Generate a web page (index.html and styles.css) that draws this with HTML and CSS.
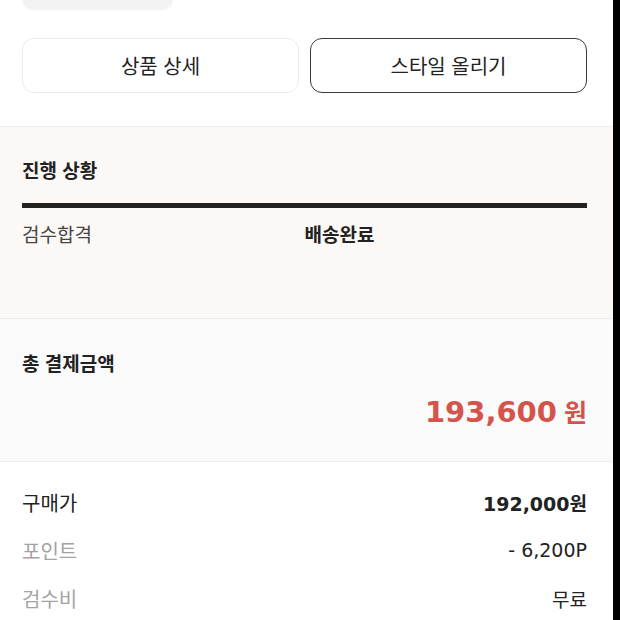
FILE: index.html
```html
<!DOCTYPE html>
<html lang="ko">
<head>
<meta charset="utf-8">
<link rel="stylesheet" href="styles.css">
</head>
<body>
<div class="screen">
  <div class="thumb-bar"><div class="thumb"></div></div>

  <div class="actions">
    <button class="btn btn-light">상품 상세</button>
    <button class="btn btn-dark">스타일 올리기</button>
  </div>

  <section class="progress">
    <h2 class="sec-title">진행 상황</h2>
    <div class="bar"></div>
    <div class="steps">
      <span class="step">검수합격</span>
      <span class="step step-current">배송완료</span>
    </div>
  </section>

  <section class="total">
    <h2 class="sec-title">총 결제금액</h2>
    <div class="price"><span class="price-num">193,600</span><span class="price-unit">원</span></div>
  </section>

  <section class="details">
    <div class="row">
      <span class="row-label row-label-main">구매가</span>
      <span class="row-value row-value-bold">192,000원</span>
    </div>
    <div class="row">
      <span class="row-label">포인트</span>
      <span class="row-value">- 6,200P</span>
    </div>
    <div class="row">
      <span class="row-label">검수비</span>
      <span class="row-value">무료</span>
    </div>
  </section>
</div>
</body>
</html>
```

FILE: styles.css
```css
* { box-sizing: border-box; }
html, body { margin: 0; padding: 0; }
body {
  background: #000;
  font-family: "Noto Sans CJK KR", "Noto Sans", sans-serif;
  color: #222;
}
.screen {
  width: 613px;
  height: 620px;
  background: #fff;
  overflow: hidden;
}
.thumb-bar { padding: 0 22px; }
.thumb {
  width: 151px;
  height: 10px;
  background: #f3f3f3;
  border-radius: 0 0 10px 10px;
}
.actions {
  display: grid;
  grid-template-columns: 1fr 1fr;
  gap: 11px;
  padding: 28px 26px 0 22px;
  margin-bottom: 33px;
}
.btn {
  height: 55px;
  border-radius: 12px;
  background: #fff;
  font-family: "Noto Sans CJK KR", sans-serif;
  font-size: 20px;
  font-weight: 400;
  color: #222;
  padding: 0;
}
.btn-light { border: 1px solid #ebebeb; }
.btn-dark { border: 1.5px solid #3a3a3a; }

.sec-title {
  margin: 0;
  font-size: 19px;
  line-height: 24px;
  font-weight: 700;
  color: #222;
}
.progress {
  border-top: 1px solid #efedec;
  background: #fcf8f6;
  padding: 31px 26px 72px 22px;
}
.bar {
  margin-top: 21px;
  height: 5px;
  background: #222;
}
.steps {
  margin-top: 14px;
  display: grid;
  grid-template-columns: 1fr 1fr;
  font-size: 19px;
  line-height: 24px;
}
.step { color: #444; font-weight: 400; }
.step-current { color: #222; font-weight: 700; }

.total {
  border-top: 1px solid #efebe9;
  border-bottom: 1px solid #eeeeee;
  background: #fafafa;
  padding: 32px 26px 32px 22px;
}
.price {
  margin-top: 18px;
  height: 36px;
  display: flex;
  justify-content: flex-end;
  align-items: baseline;
  gap: 7px;
  color: #d4544b;
  font-weight: 700;
  line-height: 36px;
}
.price-num { font-size: 29px; font-family: "DejaVu Sans", sans-serif; }
.price-unit { font-size: 25px; font-family: "Noto Sans CJK KR", sans-serif; }

.details {
  padding: 28px 26px 0 22px;
  display: flex;
  flex-direction: column;
  gap: 24px;
}
.row {
  display: flex;
  justify-content: space-between;
  align-items: center;
  height: 24px;
}
.row-label {
  font-size: 20px;
  font-weight: 400;
  color: #a3a3a3;
}
.row-label-main { color: #222; }
.row-value {
  font-family: "DejaVu Sans", "Noto Sans CJK KR", sans-serif;
  font-size: 19px;
  color: #222;
}
.row-value-bold { font-weight: 700; }
```
